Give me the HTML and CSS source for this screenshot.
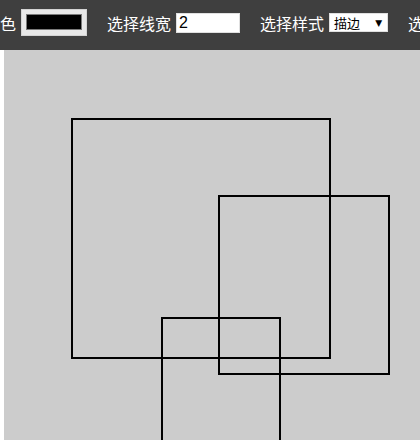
FILE: index.html
```html
<!DOCTYPE html>
<html lang="zh">
<head>
<meta charset="utf-8">
<title>画板</title>
<link rel="stylesheet" href="styles.css">
</head>
<body>
<div class="toolbar">
  <div class="tools">
    <div class="group">
      <span class="label">选择颜色</span>
      <span class="color-input"><span class="swatch"></span></span>
    </div>
    <div class="group">
      <span class="label">选择线宽</span>
      <span class="text-input">2</span>
    </div>
    <div class="group">
      <span class="label">选择样式</span>
      <span class="select"><span class="select-text">描边</span><span class="arrow">▼</span></span>
    </div>
    <div class="group">
      <span class="label">选择形状</span>
    </div>
  </div>
</div>
<div class="main">
  <div class="strip"></div>
  <div class="canvas">
    <svg class="drawing" width="416" height="390" viewBox="0 0 416 390">
      <rect x="68" y="69" width="258" height="239" fill="none" stroke="#000" stroke-width="2"/>
      <rect x="215" y="146" width="170" height="178" fill="none" stroke="#000" stroke-width="2"/>
      <rect x="158" y="268" width="118" height="200" fill="none" stroke="#000" stroke-width="2"/>
    </svg>
  </div>
</div>
</body>
</html>
```
FILE: styles.css
```css
html, body {
  margin: 0;
  padding: 0;
  width: 420px;
  height: 440px;
  overflow: hidden;
  background: #ffffff;
}
.toolbar {
  height: 50px;
  background: #3f3f3f;
  overflow: hidden;
  box-sizing: border-box;
  padding-bottom: 5px;
  display: flex;
  align-items: center;
}
.tools {
  display: flex;
  align-items: center;
  margin-left: -48px;
  white-space: nowrap;
  flex-shrink: 0;
}
.group {
  display: flex;
  align-items: center;
  margin-right: 20px;
  flex-shrink: 0;
}
.label {
  color: #ffffff;
  font-family: "Noto Sans CJK SC", "Noto Sans", sans-serif;
  font-size: 16px;
  line-height: 20px;
  margin-right: 5px;
}
.color-input {
  display: flex;
  box-sizing: border-box;
  width: 66px;
  height: 27px;
  padding: 4px 4px 5px 4px;
  background: #e8e8e8;
  border: 1px solid #d4d4d4;
}
.swatch {
  flex: 1;
  background: #000000;
  border: 1px solid #7a7a7a;
}
.text-input {
  box-sizing: border-box;
  width: 64px;
  height: 20px;
  background: #ffffff;
  border: 1px solid #e0e0e0;
  color: #000000;
  font-family: "Liberation Sans", Arial, sans-serif;
  font-size: 16px;
  line-height: 18px;
  padding-left: 2px;
}
.select {
  box-sizing: border-box;
  width: 59px;
  height: 19px;
  background: #ffffff;
  border: 1px solid #e0e0e0;
  display: flex;
  align-items: center;
  justify-content: space-between;
  padding: 0 5px 0 4px;
}
.select-text {
  color: #000000;
  font-family: "Noto Sans CJK SC", sans-serif;
  font-size: 13px;
  line-height: 17px;
}
.arrow {
  color: #000000;
  font-family: "DejaVu Sans", sans-serif;
  font-size: 9px;
  line-height: 10px;
}
.main {
  display: flex;
  height: 390px;
}
.strip {
  width: 4px;
  background: #ffffff;
  flex-shrink: 0;
}
.canvas {
  flex: 1;
  background: #cccccc;
  overflow: hidden;
}
.drawing {
  display: block;
}
```
